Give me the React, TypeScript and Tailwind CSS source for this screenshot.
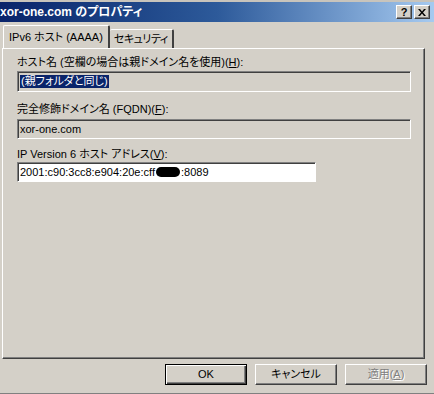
const font = "font-['Liberation_Sans','Noto_Sans_CJK_JP',sans-serif] [font-feature-settings:'palt']"

function CaptionButton({ children }: { children: React.ReactNode }) {
  return (
    <div className="w-[16px] h-[14px] bg-[#d4d0c8] border border-t-white border-l-white border-r-[#404040] border-b-[#404040] shadow-[inset_-1px_-1px_0_#808080] flex items-center justify-center text-[11px] font-bold leading-none text-black">
      {children}
    </div>
  )
}

function Field({ children, white, className }: { children?: React.ReactNode; white?: boolean; className?: string }) {
  return (
    <div
      className={
        'h-[20px] border border-t-[#808080] border-l-[#808080] border-r-white border-b-white shadow-[inset_1px_1px_0_#404040] flex items-center pl-[2px] text-[11px] text-black ' +
        (white ? 'bg-white ' : 'bg-[#d4d0c8] ') +
        (className ?? '')
      }
    >
      {children}
    </div>
  )
}

function Button({ children, primary, disabled }: { children: React.ReactNode; primary?: boolean; disabled?: boolean }) {
  return (
    <div
      className={
        'w-[82px] h-[21px] bg-[#d4d0c8] flex items-center justify-center text-[11px] ' +
        (primary
          ? 'border border-black shadow-[inset_1px_1px_0_white,inset_-1px_-1px_0_#404040,inset_-2px_-2px_0_#808080] '
          : 'border border-t-white border-l-white border-r-[#404040] border-b-[#404040] shadow-[inset_-1px_-1px_0_#808080] ') +
        (disabled ? 'text-[#808080] [text-shadow:1px_1px_0_white]' : 'text-black')
      }
    >
      {children}
    </div>
  )
}

export default function App() {
  return (
    <div className={`w-[434px] h-[394px] bg-[#d4d0c8] overflow-hidden flex flex-col ${font}`}>
      <div className="h-[2px] bg-[#c8c4bc]" />

      {/* title bar */}
      <div className="h-[20px] bg-gradient-to-r from-[#0a246a] via-[#2d5a9a] to-[#a6caf0] flex items-center justify-between pr-[4px]">
        <span className="ml-0 text-white text-[12px] font-bold whitespace-nowrap">xor-one.com のプロパティ</span>
        <div className="flex gap-[2px]">
          <CaptionButton>?</CaptionButton>
          <CaptionButton>
            <svg width="8" height="7" viewBox="0 0 8 7">
              <path d="M0 0h2l2 2.5L6 0h2L5 3.5 8 7H6L4 4.5 2 7H0l3-3.5z" fill="black" />
            </svg>
          </CaptionButton>
        </div>
      </div>

      {/* tabs */}
      <div className="mt-[4px] pl-[3px] flex items-end h-[22px] relative z-10">
        <div className="h-[23px] px-[5px] bg-[#d4d0c8] border-l border-t border-white border-r-2 border-r-[#404040] rounded-t-[2px] flex items-center text-[11px] text-black whitespace-nowrap">
          IPv6 ホスト (AAAA)
        </div>
        <div className="h-[19px] px-[4px] bg-[#d4d0c8] border-t border-t-white border-r-2 border-r-[#404040] rounded-t-[2px] flex items-center text-[11px] tracking-[-0.5px] text-black whitespace-nowrap">
          セキュリティ
        </div>
      </div>

      {/* panel */}
      <div className="ml-[2px] w-[423px] h-[311px] border border-t-white border-l-white border-r-[#404040] border-b-[#404040] shadow-[inset_-1px_-1px_0_#808080] pt-[7px] pl-[14px] pr-[13px] flex flex-col">
        <div className="text-[11px] leading-[13px] text-black whitespace-nowrap">
          ホスト名 (空欄の場合は親ドメイン名を使用)(<span className="underline">H</span>):
        </div>
        <Field className="mt-[2px] h-[21px]">
          <span className="bg-[#0a246a] text-white px-[1px] leading-[13px]">(親フォルダと同じ)</span>
        </Field>

        <div className="mt-[11px] text-[11px] leading-[13px] text-black whitespace-nowrap">
          完全修飾ドメイン名 (FQDN)(<span className="underline">F</span>):
        </div>
        <Field className="mt-[3px]">xor-one.com</Field>

        <div className="mt-[9px] text-[11px] leading-[13px] text-black whitespace-nowrap">
          IP Version 6 ホスト アドレス(<span className="underline">V</span>):
        </div>
        <Field white className="mt-[1px] w-[299px]">
          <span className="whitespace-nowrap flex items-center">
            2001:c90:3cc8:e904:20e:cff
            <span className="inline-block w-[24px] h-[10px] bg-black rounded-full mx-[1px]" />
            :8089
          </span>
        </Field>
      </div>

      {/* buttons */}
      <div className="mt-[5px] pl-[165px] flex gap-[8px]">
        <Button primary>OK</Button>
        <Button>キャンセル</Button>
        <Button disabled>
          適用(<span className="underline">A</span>)
        </Button>
      </div>

      <div className="mt-auto h-[1px] bg-[#808080]" />
    </div>
  )
}
